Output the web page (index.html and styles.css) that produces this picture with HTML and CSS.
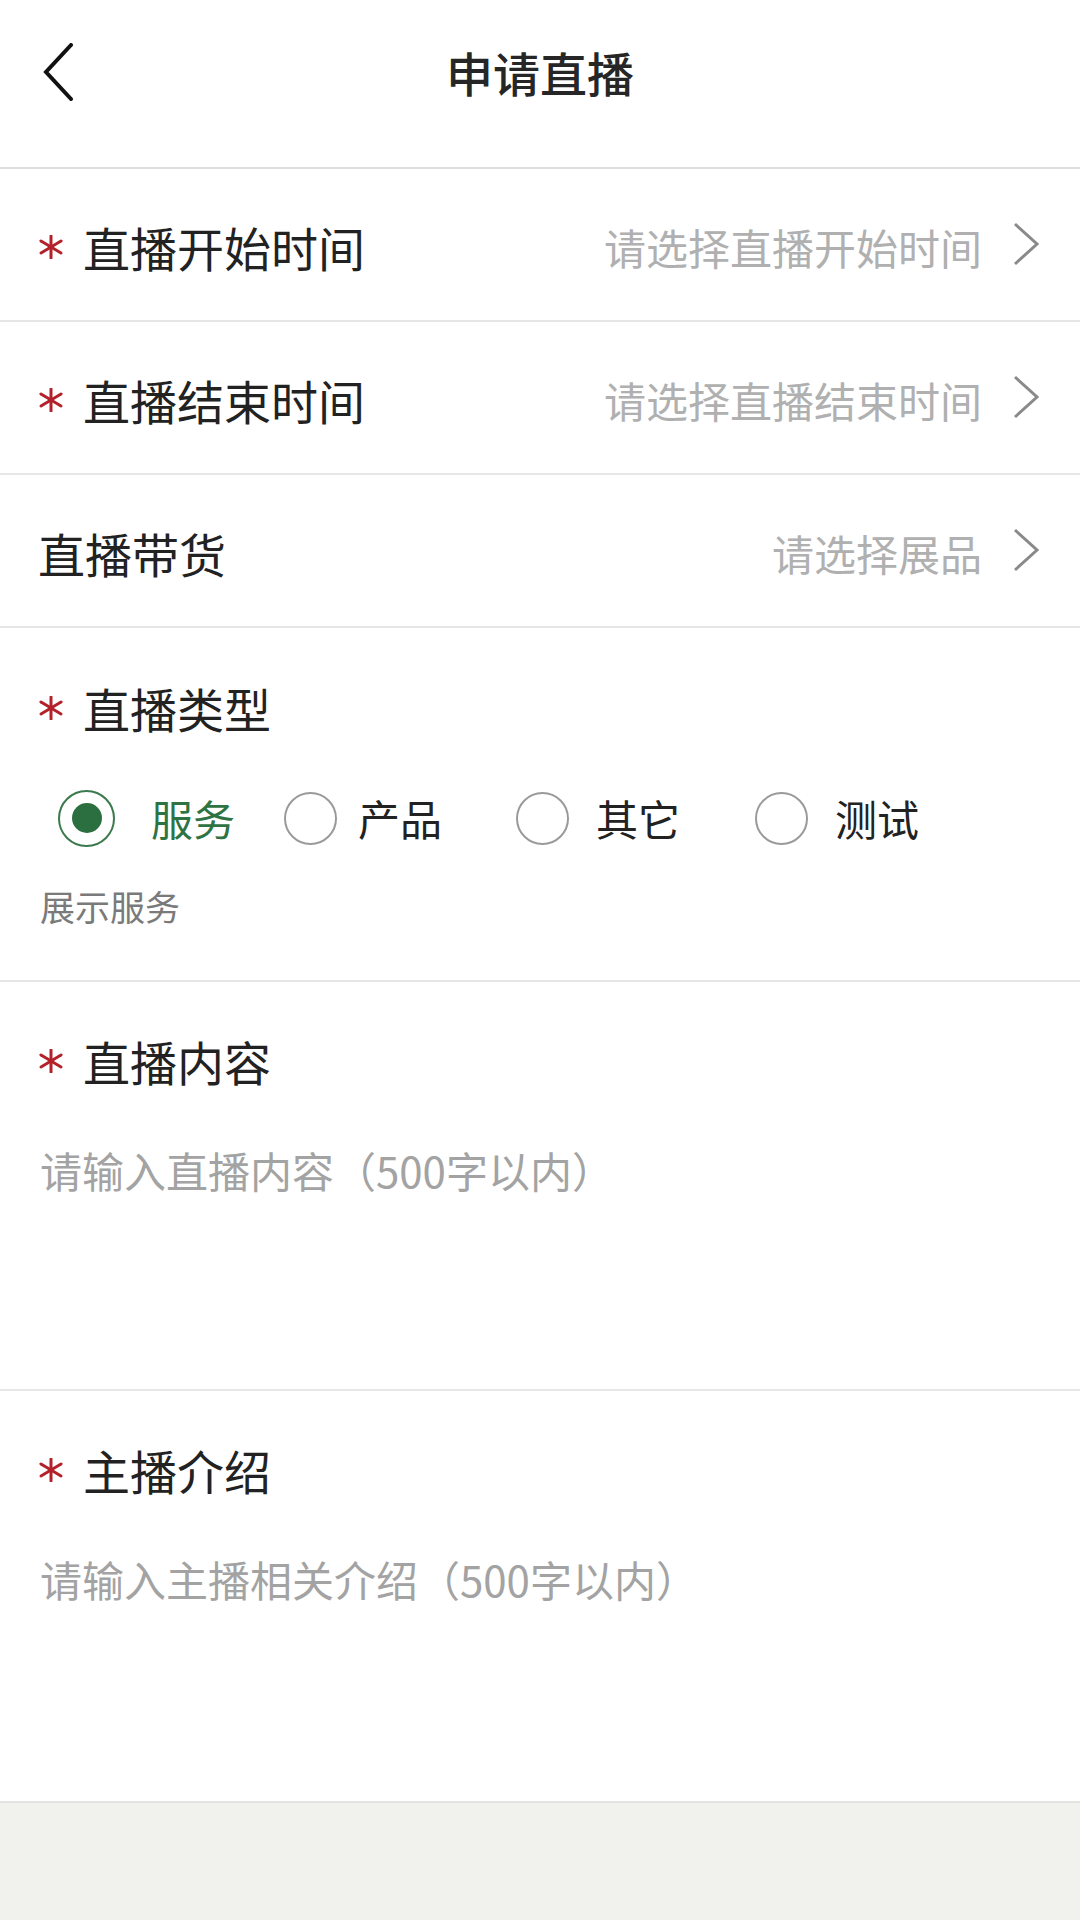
FILE: index.html
```html
<!DOCTYPE html>
<html lang="zh-CN">
<head>
<meta charset="utf-8">
<title>申请直播</title>
<link rel="stylesheet" href="styles.css">
</head>
<body>
<div class="page">
  <header class="topbar">
    <svg class="back" viewBox="0 0 32 58" width="32" height="58"><polyline points="29,2 4,29 29,56" fill="none" stroke="#111" stroke-width="4" stroke-linecap="round" stroke-linejoin="miter"/></svg>
    <h1 class="title">申请直播</h1>
  </header>

  <div class="row">
    <div class="label"><svg class="req" viewBox="0 0 26 24" width="26" height="24"><g stroke="#b3222a" stroke-width="3" stroke-linecap="round"><line x1="13" y1="1" x2="13" y2="23"/><line x1="3" y1="6" x2="23" y2="18"/><line x1="3" y1="18" x2="23" y2="6"/></g></svg>直播开始时间</div>
    <div class="value">请选择直播开始时间<svg class="chev" viewBox="0 0 28 44" width="28" height="44"><polyline points="3,2 25,22 3,42" fill="none" stroke="#8a8a8a" stroke-width="3"/></svg></div>
  </div>
  <div class="row">
    <div class="label"><svg class="req" viewBox="0 0 26 24" width="26" height="24"><g stroke="#b3222a" stroke-width="3" stroke-linecap="round"><line x1="13" y1="1" x2="13" y2="23"/><line x1="3" y1="6" x2="23" y2="18"/><line x1="3" y1="18" x2="23" y2="6"/></g></svg>直播结束时间</div>
    <div class="value">请选择直播结束时间<svg class="chev" viewBox="0 0 28 44" width="28" height="44"><polyline points="3,2 25,22 3,42" fill="none" stroke="#8a8a8a" stroke-width="3"/></svg></div>
  </div>
  <div class="row">
    <div class="label">直播带货</div>
    <div class="value">请选择展品<svg class="chev" viewBox="0 0 28 44" width="28" height="44"><polyline points="3,2 25,22 3,42" fill="none" stroke="#8a8a8a" stroke-width="3"/></svg></div>
  </div>

  <section class="block type">
    <div class="label"><svg class="req" viewBox="0 0 26 24" width="26" height="24"><g stroke="#b3222a" stroke-width="3" stroke-linecap="round"><line x1="13" y1="1" x2="13" y2="23"/><line x1="3" y1="6" x2="23" y2="18"/><line x1="3" y1="18" x2="23" y2="6"/></g></svg>直播类型</div>
    <div class="radios">
      <div class="radio checked"><span class="dot"></span><span class="rtext">服务</span></div>
      <div class="radio"><span class="dot"></span><span class="rtext">产品</span></div>
      <div class="radio wide"><span class="dot"></span><span class="rtext">其它</span></div>
      <div class="radio wide"><span class="dot"></span><span class="rtext">测试</span></div>
    </div>
    <div class="hint">展示服务</div>
  </section>

  <section class="block area">
    <div class="label"><svg class="req" viewBox="0 0 26 24" width="26" height="24"><g stroke="#b3222a" stroke-width="3" stroke-linecap="round"><line x1="13" y1="1" x2="13" y2="23"/><line x1="3" y1="6" x2="23" y2="18"/><line x1="3" y1="18" x2="23" y2="6"/></g></svg>直播内容</div>
    <div class="placeholder">请输入直播内容（500字以内）</div>
  </section>

  <section class="block area last">
    <div class="label"><svg class="req" viewBox="0 0 26 24" width="26" height="24"><g stroke="#b3222a" stroke-width="3" stroke-linecap="round"><line x1="13" y1="1" x2="13" y2="23"/><line x1="3" y1="6" x2="23" y2="18"/><line x1="3" y1="18" x2="23" y2="6"/></g></svg>主播介绍</div>
    <div class="placeholder">请输入主播相关介绍（500字以内）</div>
  </section>
</div>
</body>
</html>
```

FILE: styles.css
```css
* { box-sizing: border-box; margin: 0; padding: 0; }

html, body {
  width: 1080px;
  height: 1920px;
}

body {
  background: #f1f1ed;
  font-family: "Noto Sans CJK SC", "Noto Sans", sans-serif;
  color: #222;
}

.page {
  background: #fff;
  border-bottom: 2px solid #e4e4e2;
}

.topbar {
  height: 169px;
  border-bottom: 2px solid #dedede;
  display: flex;
  align-items: flex-start;
  position: relative;
}

.back {
  margin: 43px 0 0 42px;
  display: block;
}

.title {
  position: absolute;
  left: 0;
  right: 0;
  top: 40px;
  text-align: center;
  font-size: 47px;
  line-height: 64px;
  font-weight: 500;
  color: #262626;
}

.row {
  height: 153px;
  border-bottom: 2px solid #e6e6e6;
  padding: 0 40px 0 38px;
  display: flex;
  align-items: center;
  justify-content: space-between;
}

.label {
  display: flex;
  align-items: center;
  font-size: 47px;
  line-height: 64px;
  color: #222;
}

.row .label { padding-top: 4px; }

.req {
  display: block;
  margin-right: 19px;
  flex: none;
}

.value {
  display: flex;
  align-items: center;
  font-size: 42px;
  line-height: 60px;
  color: #b0b0b0;
  padding-top: 4px;
}

.chev {
  display: block;
  margin-left: 30px;
  margin-top: -6px;
}

.block {
  border-bottom: 2px solid #e6e6e6;
  padding: 48px 40px 0 38px;
}

.type { height: 354px; }

.radios {
  display: flex;
  align-items: center;
  margin-top: 48px;
  padding-left: 20px;
}

.radio {
  display: flex;
  align-items: center;
  width: 232px;
  font-size: 42px;
  line-height: 60px;
  color: #222;
}

.radio.wide { width: 239px; }

.radio .dot {
  width: 53px;
  height: 53px;
  border: 2.5px solid #9a9a9a;
  border-radius: 50%;
  flex: none;
  margin-right: 21px;
  position: relative;
}

.radio.wide .dot { margin-right: 27px; }

.radio.checked {
  width: 226px;
  color: #2e7342;
}

.radio.checked .dot {
  width: 57px;
  height: 57px;
  border: 2px solid #3a7a4c;
  margin-right: 36px;
}

.radio.checked .dot::after {
  content: "";
  position: absolute;
  left: 50%;
  top: 50%;
  width: 30px;
  height: 30px;
  margin: -15px 0 0 -15px;
  border-radius: 50%;
  background: #2b6e3f;
}

.hint {
  margin-top: 33px;
  font-size: 35px;
  line-height: 50px;
  color: #7a7a7a;
  padding-left: 2px;
}

.area { height: 409px; padding-top: 47px; }

.area.last { height: 410px; border-bottom: none; }

.placeholder {
  margin-top: 47px;
  font-size: 42px;
  line-height: 60px;
  color: #a3a3a3;
  padding-left: 2px;
}
```
